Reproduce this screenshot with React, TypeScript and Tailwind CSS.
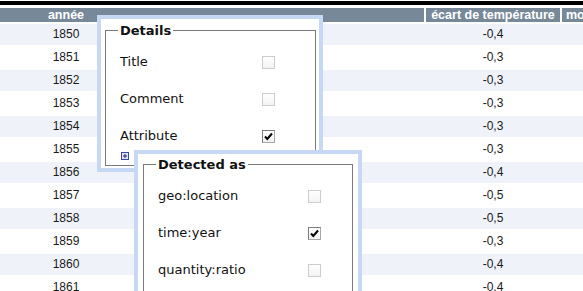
const rows: [string, string][] = [
  ['1850', '-0,4'],
  ['1851', '-0,3'],
  ['1852', '-0,3'],
  ['1853', '-0,3'],
  ['1854', '-0,3'],
  ['1855', '-0,3'],
  ['1856', '-0,4'],
  ['1857', '-0,5'],
  ['1858', '-0,5'],
  ['1859', '-0,3'],
  ['1860', '-0,4'],
  ['1861', '-0,4'],
];

function Check({ checked }: { checked?: boolean }) {
  return checked ? (
    <span className="flex h-[13px] w-[13px] shrink-0 items-center justify-center border border-[#a8a8a8] border-l-[#7c7c7c] border-t-[#7c7c7c] bg-gradient-to-b from-white to-[#f1f1f1]">
      <svg width="11" height="11" viewBox="0 0 11 11">
        <path d="M2 5.5 L4.3 8 L9 2.5" fill="none" stroke="#000" strokeWidth="2" />
      </svg>
    </span>
  ) : (
    <span className="block h-[13px] w-[13px] shrink-0 border border-[#cdcdcd] bg-gradient-to-b from-white to-[#f3f3f3]" />
  );
}

function OptionRow({ label, checked, labelWidth }: { label: string; checked?: boolean; labelWidth: string }) {
  return (
    <div className="flex h-[24px] items-center">
      <span className={`${labelWidth} pl-[2px]`}>{label}</span>
      <Check checked={checked} />
    </div>
  );
}

export default function App() {
  return (
    <div className="relative h-[291px] w-[583px] overflow-hidden bg-white font-['Liberation_Sans',Arial,sans-serif] text-[12px]">
      {/* barre noire du haut */}
      <div className="h-[1px]" />
      <div className="h-[4px] bg-black" />
      <div className="h-[3px]" />

      {/* en-tête du tableau */}
      <div className="flex h-[14px] gap-[2px] text-[12.5px] font-bold leading-[14px] text-white">
        <div className="flex w-[424px] shrink-0 bg-[#778899]">
          <span className="w-[132px] text-center">année</span>
        </div>
        <div className="w-[134px] shrink-0 whitespace-nowrap bg-[#778899] text-center">écart de température</div>
        <div className="w-[120px] shrink-0 whitespace-nowrap bg-[#778899] pl-[4px]">moyenne</div>
      </div>

      {/* lignes */}
      <div className="mt-[2px] flex flex-col gap-[2px]">
        {rows.map(([year, value], i) => (
          <div
            key={year}
            className={`flex h-[21px] gap-[2px] leading-[21px] text-[#1a1a1a] ${i % 2 === 0 ? 'bg-[#eff3f9]' : 'bg-white'}`}
          >
            <div className="w-[132px] shrink-0 text-center">{year}</div>
            <div className="w-[290px] shrink-0" />
            <div className="w-[134px] shrink-0 text-center">{value}</div>
            <div className="w-[120px] shrink-0" />
          </div>
        ))}
      </div>

      {/* popup Details */}
      <div className="absolute left-[97px] top-[15px] w-[226px] border-4 border-[#c6d8f4] bg-white pb-[2px] pl-[4px] pr-[3px] pt-[4px] font-['DejaVu_Sans',sans-serif] text-[13px] text-[#111]">
        <fieldset className="border border-[#7a7a7a] px-[12px] pb-[5px] pt-[12px]">
          <legend className="px-[2px] font-bold leading-[15px]">Details</legend>
          <div className="flex flex-col gap-[13px]">
            <OptionRow label="Title" labelWidth="w-[144px]" />
            <OptionRow label="Comment" labelWidth="w-[144px]" />
            <OptionRow label="Attribute" labelWidth="w-[144px]" checked />
          </div>
          <svg className="ml-[3px] mt-[4px] block" width="8" height="8" viewBox="0 0 8 8">
            <rect x="0.5" y="0.5" width="7" height="7" fill="#e4e4f6" stroke="#3b4a9a" />
            <path d="M2 4 H6 M4 2 V6" stroke="#1d2a7a" strokeWidth="1" />
          </svg>
        </fieldset>
      </div>

      {/* popup Detected as */}
      <div className="absolute left-[134px] top-[150px] w-[228px] border-4 border-[#c6d8f4] bg-white pb-[2px] pl-[5px] pr-[5px] pt-[3px] font-['DejaVu_Sans',sans-serif] text-[13px] text-[#111]">
        <fieldset className="border border-[#7a7a7a] px-[12px] pb-[20px] pt-[12px]">
          <legend className="px-[2px] font-bold leading-[15px]">Detected as</legend>
          <div className="flex flex-col gap-[13px]">
            <OptionRow label="geo:location" labelWidth="w-[152px]" />
            <OptionRow label="time:year" labelWidth="w-[152px]" checked />
            <OptionRow label="quantity:ratio" labelWidth="w-[152px]" />
          </div>
        </fieldset>
      </div>
    </div>
  );
}
